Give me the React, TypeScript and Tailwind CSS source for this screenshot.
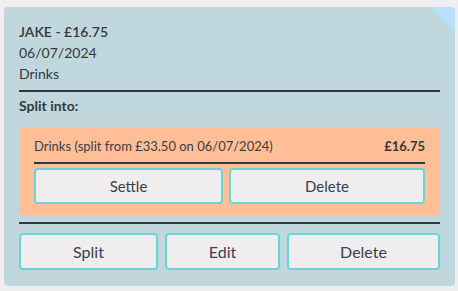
import React from 'react';

const font = { fontFamily: 'Lato, "Noto Sans", sans-serif' };

const Btn: React.FC<{ label: string; className?: string }> = ({ label, className = '' }) => (
  <button
    className={`h-full rounded-[4px] border-2 border-[#6ad6d4] bg-[#efeded] text-[15px] text-[#3b3f48] ${className}`}
  >
    {label}
  </button>
);

export default function App() {
  return (
    <div className="min-h-[291px] w-[458px] bg-[#f0eeee] pl-[4px] pt-[7px]" style={font}>
      <div className="relative h-[279px] w-[451px] overflow-hidden rounded-[4px] bg-[#bfd7dd] px-[15px] pt-[14px] text-[#333a3c]">
        <div className="absolute right-0 top-0 h-[25px] w-[25px] bg-[#b8e1fc] [clip-path:polygon(0_0,100%_0,100%_100%)]" />
        <div className="text-[14px] font-semibold leading-[21px]">JAKE - £16.75</div>
        <div className="text-[14px] leading-[21px]">06/07/2024</div>
        <div className="text-[14px] leading-[21px]">Drinks</div>
        <div className="mt-[6px] h-[2px] bg-[#2f3a3b]" />
        <div className="mt-[3px] text-[14px] font-bold leading-[21px]">Split into:</div>

        <div className="mt-[11px] rounded-[4px] bg-[#ffbe96] px-[15px] pb-[11px] pt-[9px]">
          <div className="flex justify-between text-[13px] leading-[21px] text-[#3a3f48]">
            <span>Drinks (split from £33.50 on 06/07/2024)</span>
            <span className="font-bold text-[#333a3c]">£16.75</span>
          </div>
          <div className="mt-[5px] h-[2px] bg-[#2f3a3b]" />
          <div className="mt-[4px] flex h-[36px] gap-[6px]">
            <Btn label="Settle" className="w-[189px]" />
            <Btn label="Delete" className="flex-1" />
          </div>
        </div>

        <div className="mt-[7px] h-[2px] bg-[#2f3a3b]" />
        <div className="mt-[9px] flex h-[37px] gap-[7px]">
          <Btn label="Split" className="w-[139px] text-[16px]" />
          <Btn label="Edit" className="w-[115px] text-[16px]" />
          <Btn label="Delete" className="flex-1 text-[16px]" />
        </div>
      </div>
    </div>
  );
}
